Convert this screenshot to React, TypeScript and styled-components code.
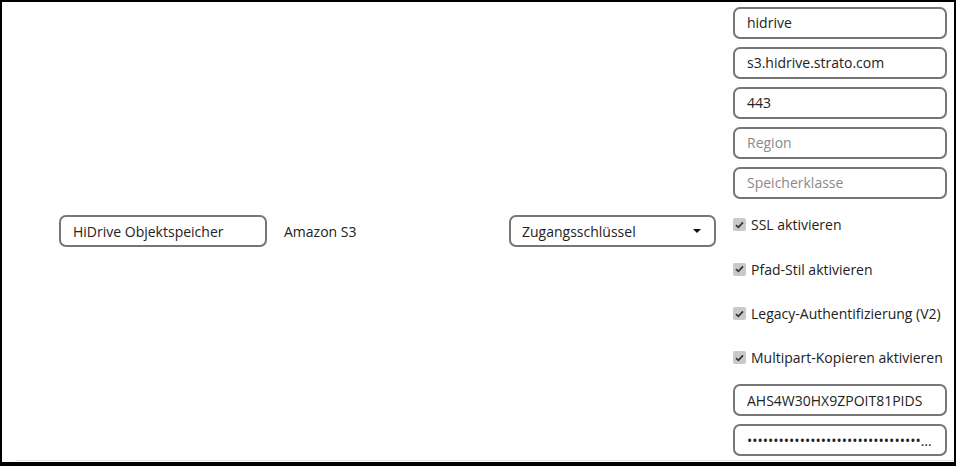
import React from "react";
import styled, { createGlobalStyle } from "styled-components";

const GlobalStyle = createGlobalStyle`
  html, body {
    margin: 0;
    padding: 0;
    background: #ffffff;
  }
  body {
    font-family: "Open Sans", "Noto Sans", sans-serif;
    font-size: 14px;
    color: #222222;
  }
`;

const Frame = styled.div`
  box-sizing: border-box;
  width: 956px;
  height: 466px;
  border: 2px solid #000000;
  border-bottom-width: 4px;
  overflow: hidden;
`;

const Row = styled.div`
  display: flex;
  align-items: center;
  gap: 17px;
  margin-left: 14px;
  padding-left: 43px;
  border-bottom: 1px solid #e6e6e6;
  height: 459px;
  box-sizing: border-box;
`;

const TextInput = styled.input<{ $width?: number }>`
  box-sizing: border-box;
  width: ${(p) => (p.$width ? `${p.$width}px` : "100%")};
  height: 32px;
  padding: 0 12px;
  border: 2px solid #767676;
  border-radius: 7px;
  background: #ffffff;
  font-family: inherit;
  font-size: 14px;
  color: #222222;
  outline: none;
  text-overflow: ellipsis;

  &::placeholder {
    color: #8a8a8a;
  }
`;

const TypeLabel = styled.div`
  width: 208px;
  font-size: 14px;
  color: #222222;
`;

const SelectWrap = styled.div`
  position: relative;
  width: 207px;
`;

const Select = styled.select`
  box-sizing: border-box;
  width: 100%;
  height: 32px;
  padding: 0 28px 0 11px;
  border: 2px solid #767676;
  border-radius: 7px;
  background: #ffffff;
  font-family: inherit;
  font-size: 14px;
  color: #222222;
  appearance: none;
  outline: none;
`;

const Caret = styled.span`
  position: absolute;
  right: 15px;
  top: 14px;
  width: 0;
  height: 0;
  border-left: 4px solid transparent;
  border-right: 4px solid transparent;
  border-top: 4px solid #111111;
  pointer-events: none;
`;

const ConfigColumn = styled.div`
  display: flex;
  flex-direction: column;
  gap: 8px;
  width: 214px;
  align-self: stretch;
  padding: 5px 0 4px;
  box-sizing: border-box;
`;

const CheckRow = styled.label`
  display: flex;
  align-items: center;
  gap: 5px;
  height: 36.5px;
  font-size: 14px;
  color: #222222;
  white-space: nowrap;
`;

const CheckBox = styled.span`
  display: inline-flex;
  align-items: center;
  justify-content: center;
  width: 13px;
  height: 13px;
  border-radius: 2px;
  background: #c9c9c9;
  flex-shrink: 0;
`;

const Check = () => (
  <CheckBox>
    <svg width="9" height="8" viewBox="0 0 9 8">
      <path d="M1 4.2 L3.4 6.4 L8 1.4" fill="none" stroke="#333333" strokeWidth="1.7" />
    </svg>
  </CheckBox>
);

const checks = [
  "SSL aktivieren",
  "Pfad-Stil aktivieren",
  "Legacy-Authentifizierung (V2)",
  "Multipart-Kopieren aktivieren",
];

export default function App() {
  return (
    <>
      <GlobalStyle />
      <Frame>
        <Row>
          <TextInput $width={208} defaultValue="HiDrive Objektspeicher" />
          <TypeLabel>Amazon S3</TypeLabel>
          <SelectWrap>
            <Select defaultValue="key">
              <option value="key">Zugangsschlüssel</option>
            </Select>
            <Caret />
          </SelectWrap>
          <ConfigColumn>
            <TextInput defaultValue="hidrive" />
            <TextInput defaultValue="s3.hidrive.strato.com" />
            <TextInput defaultValue="443" />
            <TextInput placeholder="Region" />
            <TextInput placeholder="Speicherklasse" />
            {checks.map((c) => (
              <CheckRow key={c}>
                <Check />
                {c}
              </CheckRow>
            ))}
            <TextInput defaultValue="AHS4W30HX9ZPOIT81PIDS" />
            <TextInput type="password" defaultValue="abcdefghijklmnopqrstuvwxyz0123456789abcd" />
          </ConfigColumn>
        </Row>
      </Frame>
    </>
  );
}
